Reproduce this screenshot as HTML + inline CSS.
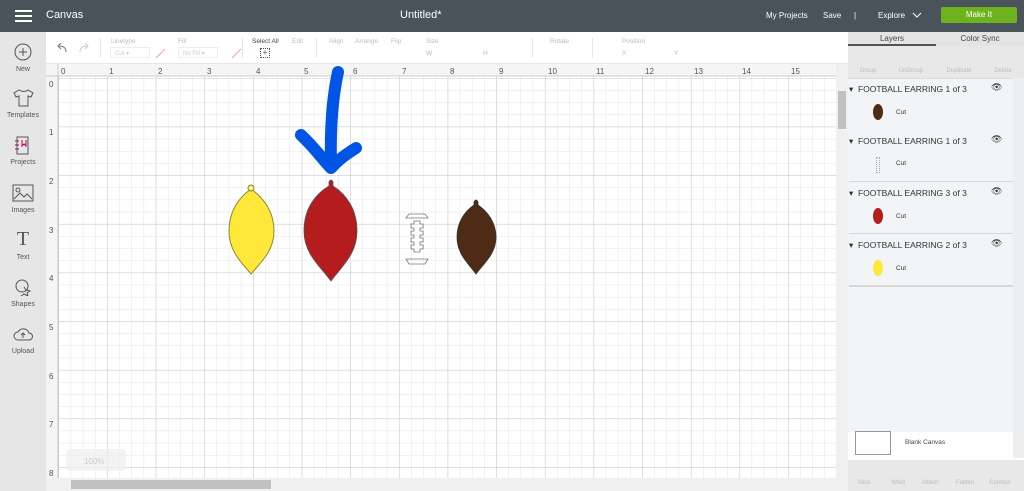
<!DOCTYPE html>
<html><head><meta charset="utf-8"><style>
*{box-sizing:border-box;margin:0;padding:0}
body{width:1024px;height:491px;overflow:hidden;font-family:"Liberation Sans",sans-serif;background:#fff;position:relative}
.hdr{position:absolute;left:0;top:0;width:1024px;height:32px;background:#4a525a;color:#fff}
.hdr span{position:absolute;top:9px;font-size:11px}
.side{position:absolute;left:0;top:32px;width:46px;height:459px;background:#e6e6e7}
.side div{position:absolute;left:0;width:46px;text-align:center;font-size:7px;color:#555}
.tb{position:absolute;left:46px;top:32px;width:802px;height:32px;background:#fff;border-bottom:1px solid #e6e6e6}
.tb span{position:absolute;font-size:6.5px;color:#bbb}
.rp{position:absolute;left:848px;top:32px;width:176px;height:459px;background:#f3f4f6}
.lay{position:absolute;left:849px;width:164px;font-size:8.5px;color:#333}
.ic{position:absolute;font-size:6px;color:#bbb;text-align:center;width:40px}
</style></head><body>
<div class="hdr">
 <div style="position:absolute;left:15px;top:10px;width:17px;height:2px;background:#fff;box-shadow:0 5px 0 #fff,0 10px 0 #fff"></div>
 <span style="left:46px">Canvas</span>
 <span style="left:400px">Untitled*</span>
 <span style="left:766px;font-size:8px;top:11px">My Projects</span>
 <span style="left:823px;font-size:8px;top:11px">Save</span>
 <span style="left:854px;font-size:8px;top:11px">|</span>
 <span style="left:878px;font-size:8px;top:11px">Explore</span>
 <svg style="position:absolute;left:912px;top:12px" width="10" height="6"><path d="M1 1l4 4 4-4" stroke="#fff" fill="none"/></svg>
 <div style="position:absolute;left:941px;top:7px;width:76px;height:16px;background:#6cb31d;border-radius:2px;font-size:8px;text-align:center;line-height:16px">Make It</div>
</div>
<div class="side">
 <svg style="position:absolute;left:14px;top:11px" width="18" height="18"><circle cx="9" cy="9" r="8" fill="none" stroke="#555"/><path d="M9 5v8M5 9h8" stroke="#555"/></svg>
 <div style="top:34px">New</div>
 <svg style="position:absolute;left:12px;top:56px" width="22" height="20"><path d="M7 2l-5 3 2 4 3-1v10h9V8l3 1 2-4-5-3q-4 3-9 0z" fill="none" stroke="#555"/></svg>
 <div style="top:80px">Templates</div>
 <svg style="position:absolute;left:14px;top:104px" width="16" height="20"><rect x="3" y="1" width="11" height="17" fill="none" stroke="#555"/><path d="M1 5h4M1 9h4M1 13h4M8 4v6l2-2 2 2V4" stroke="#a05" fill="none"/></svg>
 <div style="top:127px">Projects</div>
 <svg style="position:absolute;left:12px;top:152px" width="22" height="18"><rect x="1" y="1" width="20" height="16" fill="none" stroke="#555"/><circle cx="6" cy="6" r="2" fill="none" stroke="#555"/><path d="M2 15l6-6 4 4 3-3 5 5" fill="none" stroke="#555"/></svg>
 <div style="top:175px">Images</div>
 <div style="top:196px;font-size:20px;font-family:'Liberation Serif',serif;color:#555">T</div>
 <div style="top:222px">Text</div>
 <svg style="position:absolute;left:14px;top:246px" width="18" height="18"><circle cx="8" cy="8" r="6" fill="none" stroke="#555"/><path d="M10 9l2 3 4 1-3 2 1 3-4-2-3 2" fill="none" stroke="#555"/></svg>
 <div style="top:269px">Shapes</div>
 <svg style="position:absolute;left:13px;top:294px" width="20" height="16"><path d="M5 14a4 4 0 010-8 6 6 0 0111 1 3.5 3.5 0 010 7z" fill="none" stroke="#555"/><path d="M10 12V7M8 9l2-2 2 2" stroke="#555" fill="none"/></svg>
 <div style="top:316px">Upload</div>
</div>
<div class="tb">
 <svg style="position:absolute;left:10px;top:10px" width="40" height="12"><path d="M10 10Q10 4 3 4M5 1L2 4l3 3" fill="none" stroke="#777"/><path d="M24 10q0-6 7-6M29 1l3 3-3 3" fill="none" stroke="#ccc"/></svg>
 <div style="position:absolute;left:54px;top:6px;width:1px;height:20px;background:#e5e5e5"></div>
 <span style="left:65px;top:6px">Linetype</span>
 <span style="left:132px;top:6px">Fill</span>
 <div style="position:absolute;left:64px;top:15px;width:40px;height:11px;border:1px solid #eee;font-size:6px;color:#ccc;padding:2px 4px">Cut ▾</div>
 <div style="position:absolute;left:132px;top:15px;width:40px;height:11px;border:1px solid #eee;font-size:6px;color:#ccc;padding:2px 4px">No Fill ▾</div>
 <svg style="position:absolute;left:108px;top:15px" width="90" height="12"><path d="M2 11L11 2M78 11l9-9" stroke="#f4a0a8"/></svg>
 <div style="position:absolute;left:196px;top:6px;width:1px;height:20px;background:#e5e5e5"></div>
 <span style="left:206px;top:6px;color:#444">Select All</span>
 <div style="position:absolute;left:214px;top:16px;width:10px;height:10px;border:1px dotted #555;font-size:8px;line-height:8px;text-align:center;color:#555">+</div>
 <span style="left:246px;top:6px">Edit</span>
 <div style="position:absolute;left:270px;top:6px;width:1px;height:20px;background:#e5e5e5"></div>
 <span style="left:283px;top:6px">Align</span><span style="left:309px;top:6px">Arrange</span><span style="left:345px;top:6px">Flip</span><span style="left:380px;top:6px">Size</span>
 <span style="left:380px;top:18px">W</span><span style="left:437px;top:18px">H</span>
 <div style="position:absolute;left:486px;top:6px;width:1px;height:20px;background:#e5e5e5"></div>
 <span style="left:504px;top:6px">Rotate</span>
 <div style="position:absolute;left:546px;top:6px;width:1px;height:20px;background:#e5e5e5"></div>
 <span style="left:576px;top:6px">Position</span><span style="left:576px;top:18px">X</span><span style="left:628px;top:18px">Y</span>
</div>
<svg style="position:absolute;left:46px;top:64px" width="802" height="427">
 <defs>
  <pattern id="mn" x="12.5" y="14" width="12.16" height="12.16" patternUnits="userSpaceOnUse"><path d="M0 0V12.16M0 0H12.16" stroke="#e4e4e4" stroke-width="1"/></pattern>
  <pattern id="mj" x="12.5" y="14" width="48.65" height="48.65" patternUnits="userSpaceOnUse"><path d="M0 0V48.65M0 0H48.65" stroke="#c8c8c8" stroke-width="1"/></pattern>
 </defs>
 <rect x="0" y="0" width="802" height="427" fill="#fff"/>
 <rect x="12" y="12" width="778" height="402" fill="url(#mn)"/>
 <rect x="12" y="12" width="778" height="402" fill="url(#mj)"/>
 <rect x="0" y="0" width="790" height="12" fill="#f5f5f5"/>
 <rect x="0" y="0" width="12" height="414" fill="#f5f5f5"/>
 <path d="M0 12H790M12 0V414" stroke="#ccc"/>
 <g font-size="8" fill="#555" font-family="Liberation Sans">
  <text x="15" y="10">0</text><text x="63" y="10">1</text><text x="112" y="10">2</text><text x="161" y="10">3</text><text x="210" y="10">4</text><text x="258" y="10">5</text><text x="307" y="10">6</text><text x="356" y="10">7</text><text x="404" y="10">8</text><text x="453" y="10">9</text><text x="502" y="10">10</text><text x="550" y="10">11</text><text x="599" y="10">12</text><text x="648" y="10">13</text><text x="696" y="10">14</text><text x="745" y="10">15</text><text x="792" y="10">16</text>
  <text x="3" y="23">0</text><text x="3" y="71">1</text><text x="3" y="120">2</text><text x="3" y="169">3</text><text x="3" y="217">4</text><text x="3" y="266">5</text><text x="3" y="315">6</text><text x="3" y="363">7</text><text x="3" y="412">8</text>
 </g>
 <rect x="790" y="0" width="12" height="427" fill="#f0f0f0"/>
 <rect x="792" y="27" width="8" height="38" fill="#c1c1c1"/>
 <rect x="0" y="414" width="790" height="13" fill="#f0f0f0"/>
 <rect x="25" y="416" width="200" height="9" fill="#c1c1c1"/>
 <rect x="20" y="385" width="60" height="22" rx="4" fill="#f0f0f0" opacity=".8"/>
 <text x="38" y="400" font-size="8" fill="#ccc">100%</text>
</svg>
<svg style="position:absolute;left:0;top:0" width="848" height="491">
 <path d="M251 189C238 198 229 212 229 231C229 251 241 262 251 274C261 262 274 251 274 231C274 212 264 198 251 189Z" fill="#ffe83a" stroke="#8a8a30" stroke-width="1"/>
 <circle cx="251" cy="188" r="3" fill="#ffe83a" stroke="#8a8a30"/><circle cx="251" cy="188" r="1.3" fill="#fff"/>
 <path d="M329 186C314 195 304 210 304 231C304 254 320 266 331 281C342 266 357 254 357 231C357 210 347 195 333 186L333 182Q331 178 329 182Z" fill="#b51c1e" stroke="#555" stroke-width=".8"/>
 <path d="M474 205C464 212 457 223 457 237C457 254 468 263 476 274C484 263 496 254 496 237C496 223 488 212 478 205L478 202Q476 198 474 202Z" fill="#4d2b15" stroke="#333" stroke-width=".8"/>
 <g fill="none" stroke="#777" stroke-width=".8">
  <path d="M409 214h16l3 4h-22z"/><path d="M406 259h22l-3 5h-16z"/>
  <path d="M414 221h6v3h3v4h-3v3h3v4h-3v3h3v4h-3v3h3v4h-3v3h-6v-3h-3v-4h3v-3h-3v-4h3v-3h-3v-4h3v-3h-3v-4h3z"/>
 </g>
 <g fill="none" stroke="#0055e6" stroke-width="12" stroke-linecap="round" stroke-linejoin="round">
  <path d="M338 72C333 95 330 125 331 165"/>
  <path d="M301 135C315 148 323 160 331 168C338 160 345 155 356 148"/>
 </g>
</svg>
<div class="rp">
 <div style="position:absolute;left:0;top:0;width:176px;height:14px;background:#e4e4e4"></div>
 <div style="position:absolute;left:0;top:0;width:88px;height:14px;text-align:center;font-size:8px;color:#444;line-height:13px;border-bottom:2px solid #4a525a">Layers</div>
 <div style="position:absolute;left:88px;top:0;width:88px;height:14px;text-align:center;font-size:8px;color:#444;line-height:13px">Color Sync</div>
 <div style="position:absolute;left:0;top:14px;width:176px;height:32px;background:#e8e8e8"></div>
 <div class="ic" style="left:0;top:36px">Group</div><div class="ic" style="left:43px;top:36px">UnGroup</div><div class="ic" style="left:91px;top:36px">Duplicate</div><div class="ic" style="left:135px;top:36px">Delete</div>
 <div style="position:absolute;left:0;top:46px;width:176px;height:1px;background:#ddd"></div>
 <div style="position:absolute;left:0;top:400px;width:176px;height:28px;background:#fff"></div>
 <div style="position:absolute;left:7px;top:399px;width:36px;height:24px;border:1px solid #999;background:#fff"></div>
 <div style="position:absolute;left:57px;top:407px;font-size:6.5px;color:#444">Blank Canvas</div>
 <div style="position:absolute;left:0;top:428px;width:176px;height:31px;background:#e8e8e8"></div>
 <div class="ic" style="left:-4px;top:448px">Slice</div><div class="ic" style="left:30px;top:448px">Weld</div><div class="ic" style="left:62px;top:448px">Attach</div><div class="ic" style="left:97px;top:448px">Flatten</div><div class="ic" style="left:132px;top:448px">Contour</div>
</div>
<div class="lay" style="top:84px">▾ &nbsp;FOOTBALL EARRING 1 of 3</div>
<div class="lay" style="top:136px">▾ &nbsp;FOOTBALL EARRING 1 of 3</div>
<div class="lay" style="top:188px">▾ &nbsp;FOOTBALL EARRING 3 of 3</div>
<div class="lay" style="top:240px">▾ &nbsp;FOOTBALL EARRING 2 of 3</div>
<div style="position:absolute;left:849px;top:181px;width:164px;height:1px;background:#d8d8d8"></div>
<div style="position:absolute;left:849px;top:233px;width:164px;height:1px;background:#d8d8d8"></div>
<div style="position:absolute;left:849px;top:285px;width:164px;height:2px;background:#d8d8d8"></div>
<div style="position:absolute;left:873px;top:104px;width:10px;height:16px;border-radius:50%;background:#4d2b15"></div>
<div style="position:absolute;left:876px;top:157px;width:4px;height:16px;border:1px dotted #aaa"></div>
<div style="position:absolute;left:873px;top:208px;width:10px;height:16px;border-radius:50%;background:#b51c1e"></div>
<div style="position:absolute;left:873px;top:260px;width:10px;height:16px;border-radius:50%;background:#ffe83a"></div>
<div style="position:absolute;left:896px;top:109px;font-size:6.5px;color:#333">Cut</div>
<div style="position:absolute;left:896px;top:160px;font-size:6.5px;color:#333">Cut</div>
<div style="position:absolute;left:896px;top:213px;font-size:6.5px;color:#333">Cut</div>
<div style="position:absolute;left:896px;top:265px;font-size:6.5px;color:#333">Cut</div>
<div style="position:absolute;left:991px;top:82px;font-size:9px;color:#333">👁</div>
<div style="position:absolute;left:991px;top:134px;font-size:9px;color:#333">👁</div>
<div style="position:absolute;left:991px;top:186px;font-size:9px;color:#333">👁</div>
<div style="position:absolute;left:991px;top:238px;font-size:9px;color:#333">👁</div>
<div style="position:absolute;left:1013px;top:78px;width:11px;height:380px;background:#eceef0"></div>
</body></html>
